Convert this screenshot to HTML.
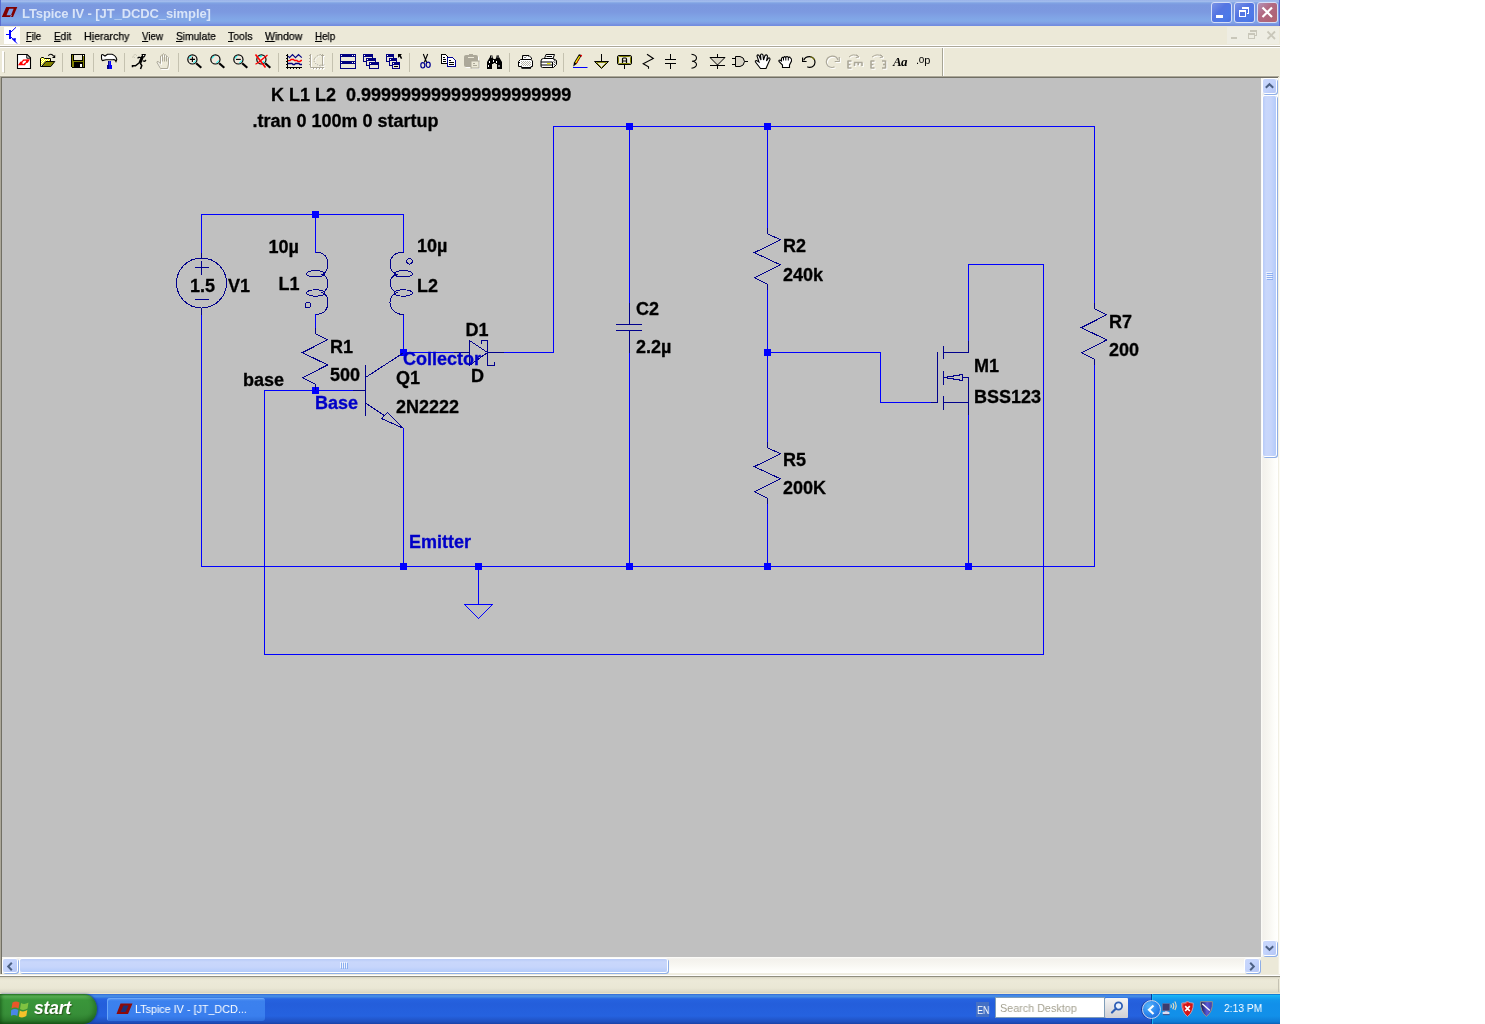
<!DOCTYPE html><html><head><meta charset="utf-8"><title>LTspice IV</title><style>
html,body{margin:0;padding:0;background:#fff;}
body{width:1485px;height:1024px;overflow:hidden;position:relative;font-family:"Liberation Sans",sans-serif;}
#scr{position:absolute;left:0;top:0;width:1280px;height:1024px;overflow:hidden;background:#ece9d8;}
.abs{position:absolute;}
#title{left:0;top:0;width:1280px;height:26px;background:linear-gradient(to bottom,#9bb3ea 0px,#a0bbec 1.5px,#80a3e3 3px,#7b98df 5px,#7c99e0 12px,#80a3e5 17px,#82a9e8 21px,#7e9ce3 23.5px,#728ddf 25px,#728ddf 26px);}
#title .tx{left:21.5px;top:6px;font-weight:bold;font-size:13px;line-height:15px;color:#d8e4f8;white-space:nowrap;letter-spacing:-0.1px;}
#menu{left:0;top:26px;width:1280px;height:19px;background:#ece9d8;}
.mi{position:absolute;top:30px;font-size:11px;color:#000;-webkit-text-stroke:0.25px #000;white-space:nowrap;line-height:12px;transform-origin:0 0;}
.mi,#title .tx,#start div,#tbtn div,.gt{will-change:transform;}
.tb{position:absolute;top:2px;width:19px;height:19px;border:1px solid #d5def7;border-radius:3px;}
.mi u{text-decoration:underline;text-underline-offset:1px;}
#canvas{left:2px;top:78px;width:1259px;height:879px;background:#c0c0c0;}
#sch{position:absolute;left:0;top:0;will-change:transform;}
.ic{position:absolute;top:53px;overflow:visible;}
.sep{position:absolute;top:53px;width:1px;height:19px;background:#c5c2b0;}
.sbtn{width:13px;height:14px;border-radius:2px;background:linear-gradient(135deg,#c9d7fc 0,#c3d3fc 50%,#b4c6f6 100%);box-shadow:0 0 0 1px #fff,1px 1px 0 1px #8eaee6;}
.sth{border-radius:2px;box-shadow:0 0 0 1px #fff,1px 1px 0 1px #8eaee6;}
.sbtn2{width:14px;height:13px;border-radius:2px;background:linear-gradient(135deg,#c9d7fc 0,#c3d3fc 50%,#b4c6f6 100%);box-shadow:0 0 0 1px #fff,1px 1px 0 1px #8eaee6;}
#task{left:0;top:994px;width:1280px;height:30px;background:linear-gradient(to bottom,#3168d5 0,#4993e6 2px,#2663e0 5px,#245edb 10px,#2562df 22px,#1f4fbf 28px,#1941a5 30px);}
#start{left:0;top:994px;width:97px;height:30px;border-radius:0 14px 14px 0/0 16px 16px 0;background:linear-gradient(to bottom,#2a7f2a 0,#58b054 2px,#3a963a 6px,#378f38 20px,#2d7e2e 27px,#236823 30px);box-shadow:1px 0 2px #1b3f9a,inset 2px 0 3px rgba(0,50,0,.35),inset -3px -2px 4px rgba(0,50,0,.3);}
#tbtn{left:107px;top:998px;width:158px;height:23px;border-radius:3px;background:linear-gradient(to bottom,#5c9cf5 0,#3c81ee 3px,#3a7fee 18px,#2f6fdc 23px);box-shadow:inset 1px 1px 0 #6aa6f8;}
#tray{left:1152px;top:994px;width:128px;height:30px;background:linear-gradient(to bottom,#0d62c8 0,#19b6f4 1.500px,#17a8f2 3px,#1296ec 6px,#1190ea 10px,#1290e9 22px,#0e7bd5 28px,#0a5fb5 30px);border-left:1px solid #18b8f5;box-shadow:-1px 0 0 #0a3a9a;}
</style></head><body>
<div id="scr">
<!-- title bar -->
<div id="title" class="abs"><div class="abs tx">LTspice IV - [JT_DCDC_simple]</div></div>
<div class="abs" style="left:0;top:0;width:1px;height:26px;background:#5a6fd0"></div>
<div class="abs" style="left:1279px;top:0;width:1px;height:26px;background:#5a66cf"></div>
<svg class="abs" style="left:1px;top:6px" width="18" height="12" viewBox="0 0 18 12"><path d="M5.200 1H16.300L12 11H0.800Z" fill="#800000"/><path d="M8.300 2.700H12.600L10 9.200H5.500Z" fill="#7c9ce1"/><path d="M10.600 9L9.400 11.200" stroke="#7c9ce1" stroke-width="0.900"/></svg>
<div class="tb" style="left:1211px;background:linear-gradient(135deg,#7a93e6 0,#5575e2 40%,#4d7ae8 75%,#4a6fe0 100%)"><div class="abs" style="left:4px;top:12px;width:7px;height:3px;background:#fff"></div></div>
<div class="tb" style="left:1234px;background:linear-gradient(135deg,#7a93e6 0,#5575e2 40%,#4d7ae8 75%,#4a6fe0 100%)"><svg class="abs" style="left:0;top:0" width="19" height="19" viewBox="0 0 19 19" shape-rendering="crispEdges" fill="none" stroke="#fff"><path d="M7.500 4.500H13.500V10.500H12" stroke-width="1"/><path d="M7 5H14" stroke-width="2"/><rect x="4.500" y="7.500" width="6" height="6"/><path d="M4 8H11" stroke-width="2"/></svg></div>
<div class="tb" style="left:1257px;background:linear-gradient(135deg,#b493b8 0,#b26a82 40%,#ae6478 75%,#b8676f 100%)"><svg class="abs" style="left:0;top:0" width="19" height="19" viewBox="0 0 19 19"><path d="M4.500 4.500L14 14M14 4.500L4.500 14" stroke="#fff" stroke-width="2.200"/></svg></div>
<!-- menu bar -->
<div id="menu" class="abs"></div>
<div class="mi" style="left:26px;transform:scaleX(0.85)"><u>F</u>ile</div>
<div class="mi" style="left:54px;transform:scaleX(0.91)"><u>E</u>dit</div>
<div class="mi" style="left:83.5px;transform:scaleX(0.966)">H<u>i</u>erarchy</div>
<div class="mi" style="left:142px;transform:scaleX(0.888)"><u>V</u>iew</div>
<div class="mi" style="left:175.5px;transform:scaleX(0.93)"><u>S</u>imulate</div>
<div class="mi" style="left:228px;transform:scaleX(0.954)"><u>T</u>ools</div>
<div class="mi" style="left:265px;transform:scaleX(0.953)"><u>W</u>indow</div>
<div class="mi" style="left:315px;transform:scaleX(0.893)"><u>H</u>elp</div>
<div class="abs" style="left:4px;top:27px;width:16px;height:17px;background:#fff"></div>
<svg class="abs" style="left:4px;top:27px" width="16" height="17" viewBox="0 0 16 17"><rect x="5" y="3" width="2" height="9" fill="#00f"/><rect x="2" y="7" width="3" height="1" fill="#00f"/><path d="M7 5L12 0.300" stroke="#00f" stroke-width="1"/><path d="M7 10L13 16.500" stroke="#00f" stroke-width="1"/><path d="M8.500 12L11.500 11.500L11 14.500Z" fill="#00f" stroke="#00f" stroke-width="0.800"/></svg>
<div class="abs" style="left:1227px;top:27px;width:52px;height:17px;background:#eeede3"></div>
<div class="abs" style="left:1231px;top:37px;width:6px;height:2px;background:#c9c7ba"></div>
<svg class="abs" style="left:1246px;top:28px" width="14" height="14" viewBox="0 0 14 14" shape-rendering="crispEdges" fill="none" stroke="#c9c7ba"><path d="M4.500 2.500H10.500V7.500H9"/><path d="M4 3H11" stroke-width="2"/><rect x="2.500" y="5.500" width="6" height="5"/><path d="M2 6H9" stroke-width="2"/></svg>
<svg class="abs" style="left:1265px;top:29px" width="13" height="13" viewBox="0 0 13 13"><path d="M2.500 2.500L10 10M10 2.500L2.500 10" stroke="#c9c7ba" stroke-width="1.800"/></svg>
<!-- menu/toolbar separator -->
<div class="abs" style="left:0;top:45px;width:1280px;height:1px;background:#fff"></div>
<div class="abs" style="left:0;top:46px;width:1280px;height:1px;background:#aca899"></div>
<div class="abs" style="left:0;top:47px;width:1280px;height:1px;background:#fff"></div>
<div class="abs" style="left:0;top:75px;width:1280px;height:1px;background:#f0eddc"></div>
<!-- toolbar bottom edge -->
<div class="abs" style="left:0;top:76px;width:1279px;height:1px;background:#aca899"></div>
<div class="abs" style="left:0;top:77px;width:1278px;height:1px;background:#716f64"></div>
<!-- left border -->
<div class="abs" style="left:0;top:76px;width:1px;height:898px;background:#aca899"></div>
<div class="abs" style="left:1px;top:77px;width:1px;height:897px;background:#716f64"></div>
<!-- canvas -->
<div id="canvas" class="abs"></div>
<!-- vertical scrollbar -->
<div class="abs" style="left:1261px;top:78px;width:17px;height:879px;background:linear-gradient(to right,#fdfdfa 0,#f3f1ec 2px,#f8f7f2 8px,#fefefb 14px,#fff 17px)"></div>
<div class="abs" style="left:1278px;top:78px;width:1px;height:897px;background:#f1efe3"></div>
<div class="abs" style="left:1279px;top:78px;width:1px;height:897px;background:#fdfcf6"></div>
<div class="abs sbtn" style="left:1263px;top:79px"><svg width="13" height="14" viewBox="0 0 13 14"><path d="M2.800 8.800L6.500 5.200L10.200 8.800" fill="none" stroke="#4d6185" stroke-width="2"/></svg></div>
<div class="abs sbtn" style="left:1263px;top:941px"><svg width="13" height="14" viewBox="0 0 13 14"><path d="M2.800 5.200L6.500 8.800L10.200 5.200" fill="none" stroke="#4d6185" stroke-width="2"/></svg></div>
<div class="abs sth" style="left:1263px;top:96px;width:13px;height:360px;background:linear-gradient(to right,#b7caf7 0,#c9d7fb 3px,#c6d5fb 8px,#b4cbfa 13px)"></div>
<div class="abs" style="left:1266px;top:272px;width:6px;height:1px;background:#eef3fe;box-shadow:0 2px 0 #eef3fe,0 4px 0 #eef3fe,0 6px 0 #eef3fe,1px 1px 0 #8caef0,1px 3px 0 #8caef0,1px 5px 0 #8caef0,1px 7px 0 #8caef0"></div>
<!-- horizontal scrollbar -->
<div class="abs" style="left:2px;top:957px;width:1259px;height:16px;background:linear-gradient(to bottom,#fdfdfa 0,#f3f1ec 2px,#f8f7f2 8px,#fefefb 14px,#fff 16px)"></div>
<div class="abs" style="left:2px;top:973px;width:1259px;height:1px;background:#f1efe3"></div>
<div class="abs sbtn2" style="left:3px;top:959px"><svg width="14" height="13" viewBox="0 0 14 13"><path d="M8.800 2.800L5.200 6.500L8.800 10.200" fill="none" stroke="#4d6185" stroke-width="2"/></svg></div>
<div class="abs sbtn2" style="left:1245px;top:959px"><svg width="14" height="13" viewBox="0 0 14 13"><path d="M5.200 2.800L8.800 6.500L5.200 10.200" fill="none" stroke="#4d6185" stroke-width="2"/></svg></div>
<div class="abs sth" style="left:20px;top:959px;width:647px;height:13px;background:linear-gradient(to bottom,#b7caf7 0,#c9d7fb 3px,#c6d5fb 8px,#b4cbfa 13px)"></div>
<div class="abs" style="left:340px;top:962px;width:1px;height:6px;background:#eef3fe;box-shadow:2px 0 0 #eef3fe,4px 0 0 #eef3fe,6px 0 0 #eef3fe,1px 1px 0 #8caef0,3px 1px 0 #8caef0,5px 1px 0 #8caef0,7px 1px 0 #8caef0"></div>
<!-- scroll corner -->
<div class="abs" style="left:1261px;top:957px;width:17px;height:17px;background:#ece9d8"></div>
<!-- below scrollbar -->
<div class="abs" style="left:0;top:974px;width:1280px;height:1px;background:#efede0"></div>
<div class="abs" style="left:0;top:975px;width:1280px;height:1px;background:#fff"></div>
<div class="abs" style="left:0;top:976px;width:1280px;height:1px;background:#8f8d7f"></div>
<div class="abs" style="left:0;top:977px;width:1280px;height:17px;background:linear-gradient(to bottom,#d6d3c1 0,#e9e6d4 2px,#ece9d8 4px,#eae7d5 11px,#e0ddcb 14px,#d8d5c1 16px,#ebe5cc 16px,#ebe5cc 17px)"></div>
<div class="abs" style="left:1278px;top:979px;width:1px;height:13px;background:#c5c2b2"></div>
<!-- taskbar -->
<div id="task" class="abs"></div>
<div id="start" class="abs"><div class="abs" style="left:34px;top:4px;font:italic bold 17.5px/20px 'Liberation Sans',sans-serif;color:#fff;text-shadow:1px 1px 1px #2a5a1c;letter-spacing:-0.2px">start</div>
<svg class="abs" style="left:11px;top:5px" width="20" height="20" viewBox="0 0 20 20"><path d="M1.5 3.5Q5 1.5 8.5 3.5L7.5 9.5Q4 7.5 0.5 9.5Z" fill="#e8562a"/><path d="M10 4Q13.5 6 17.5 3.5L16.5 9.5Q12.5 12 9 10Z" fill="#7fc241"/><path d="M0.3 11Q4 9 7.3 11L6.3 17Q3 15-0.7 17Z" fill="#4a86e8"/><path d="M8.8 11.5Q12.3 13.500 16.300 11L15.300 17Q11.300 19.500 7.800 17.500Z" fill="#f5c12a"/></svg></div>
<div id="tbtn" class="abs"><div class="abs" style="left:28px;top:5px;font-size:11px;color:#fff;white-space:nowrap;transform:scaleX(.98);transform-origin:0 0">LTspice IV - [JT_DCD...</div>
<svg class="abs" style="left:9px;top:5px" width="17" height="12" viewBox="0 0 17 12"><path d="M4.500 0.500H16.500L12 11H0.500Z" fill="#8c0a0a"/><path d="M7.500 2.500H12.500L9.500 9H4.500Z" fill="#1c2f7a"/></svg></div>
<div id="tray" class="abs"></div>
<div class="abs" style="left:976px;top:1002px;width:13px;height:15px;background:#4470c4"></div>
<div class="abs gt" style="left:976.5px;top:1004px;font-size:11px;color:#fff;transform:scaleX(.82);transform-origin:0 0">EN</div>
<div class="abs" style="left:995px;top:997px;width:108px;height:19px;background:#fff;border:1px solid #7f9db9"></div>
<div class="abs gt" style="left:1000px;top:1002px;font-size:11px;color:#a5a291;white-space:nowrap;transform:scaleX(.98);transform-origin:0 0">Search Desktop</div>
<div class="abs" style="left:1105px;top:998px;width:23px;height:20px;background:linear-gradient(to bottom,#f4f4f4,#d0d0d4);border-radius:1px"></div>
<svg class="abs" style="left:1109px;top:1000px" width="16" height="16" viewBox="0 0 16 16"><circle cx="9.500" cy="6" r="3.600" fill="#eaf2ff" stroke="#2f5fb5" stroke-width="1.800"/><path d="M7 8.500L3 12.500" stroke="#2f5fb5" stroke-width="2.200" stroke-linecap="round"/></svg>
<div class="abs" style="left:1142px;top:1000px;width:17px;height:17px;border-radius:10px;background:radial-gradient(circle at 35% 30%,#58b4f8 0,#2f8cf0 45%,#1560d8 100%);border:1px solid #c9d3ea;box-shadow:-1px 0 0 #1a3c9a"></div>
<svg class="abs" style="left:1143px;top:1001px" width="17" height="17" viewBox="0 0 17 17"><path d="M10.500 4.500L6 8.700L10.500 13" fill="none" stroke="#fff" stroke-width="2.200"/></svg>
<svg class="abs" style="left:1162px;top:1001px" width="17" height="16" viewBox="0 0 17 16"><rect x="0.700" y="2.700" width="7" height="7" fill="#3c3c6e" stroke="#6a6a96" stroke-width="0.600"/><path d="M3 10H5.500V11H3Z" fill="#b8a8d8"/><rect x="0.500" y="10.800" width="7" height="2.500" rx="1" fill="#dcdcf0"/><rect x="1" y="13.300" width="6.500" height="0.800" fill="#4a3a6a"/><path d="M8.800 3.500Q10 5 8.800 6.800M10.800 2Q12.800 5 10.800 8.200M12.800 0.500Q15.500 4.500 12.800 9" fill="none" stroke="#e8dcc0" stroke-width="1.100"/></svg>
<svg class="abs" style="left:1181px;top:1001px" width="13" height="16" viewBox="0 0 13 16"><path d="M6.500 0.500Q9 2 12.300 2.200Q12.500 11 6.500 15.500Q0.500 11 0.700 2.200Q4 2 6.500 0.500Z" fill="#d41414" stroke="#c8a8b8" stroke-width="0.900"/><path d="M6.500 1.500Q4.500 2.800 1.700 3Q1.600 6 2.500 8.500" fill="none" stroke="#f26060" stroke-width="1"/><path d="M4.200 5.200L8.800 10M8.800 5.200L4.200 10" stroke="#fff" stroke-width="1.700"/></svg>
<svg class="abs" style="left:1200px;top:1001px" width="13" height="16" viewBox="0 0 13 16"><defs><linearGradient id="bs" x1="0" y1="0" x2="1" y2="0"><stop offset="0" stop-color="#16164e"/><stop offset="0.550" stop-color="#5a5ad8"/><stop offset="1" stop-color="#3a3aa8"/></linearGradient></defs><path d="M0.600 0.700H12.400Q12.800 11 6.500 15.500Q0.200 11 0.600 0.700Z" fill="url(#bs)" stroke="#a09484" stroke-width="0.900"/><path d="M2.300 2.800L9.800 9.500" stroke="#fff" stroke-width="1.300"/></svg>
<div class="abs gt" style="left:1224px;top:1002px;font-size:11px;color:#fff;white-space:nowrap;transform:scaleX(.935);transform-origin:0 0">2:13 PM</div>

<!-- toolbar gripper -->
<div class="abs" style="left:2px;top:51px;width:2px;height:21px;background:#fff"></div>
<div class="abs" style="left:4px;top:52px;width:1px;height:21px;background:#c6c3b2"></div>
<!-- toolbar end -->
<div class="abs" style="left:942px;top:48px;width:1px;height:28px;background:#a7a594"></div>
<div class="abs" style="left:943px;top:48px;width:1px;height:28px;background:#fff"></div>
<!-- separators -->
<div class="sep" style="left:62px"></div><div class="sep" style="left:93px"></div><div class="sep" style="left:124px"></div>
<div class="sep" style="left:178px"></div><div class="sep" style="left:278px"></div><div class="sep" style="left:332px"></div>
<div class="sep" style="left:409px"></div><div class="sep" style="left:509px"></div><div class="sep" style="left:563px"></div>
<!-- new -->
<svg class="ic" style="left:16px" width="17" height="17" viewBox="0 0 17 17"><path d="M1.500 1.500H11.200L14.500 4.800V15.500H1.500Z" fill="#fff" stroke="#000" stroke-width="1.100"/><path d="M10.800 1.800V5.200H14.200" fill="none" stroke="#000" stroke-width="1"/><path d="M2 12.300L4.300 8.800L6 8.300L7 6.500L14 6.200L11.800 9.800L10.200 10.200L9 12.300Z" fill="#f00"/><path d="M6.200 10.300L7 8.600L8.200 7.800L10.300 7.800L9.500 9.600L8.300 10.300L7.300 11.300Z" fill="#fff"/></svg>
<!-- open -->
<svg class="ic" style="left:40px" width="17" height="17" viewBox="0 0 17 17"><path d="M0.500 13.500V5.500L1.500 4.500H3.500L4.500 5.500H10.500V8.500H6L2 13.500Z" fill="#ffff00" stroke="#000"/><path d="M1 6h1v1H1zM3 6h1v1H3zM5 6h1v1H5zM7 6h1v1H7zM9 6h1v1H9zM2 7h1v1H2zM4 7h1v1H4zM6 7h1v1H6zM8 7h1v1H8zM1 8h1v1H1zM3 8h1v1H3zM5 8h1v1H5zM2 9h1v1H2zM4 9h1v1H4zM1 10h1v1H1zM3 10h1v1H3zM2 11h1v1H2zM1 12h1v1H1zM2 5h1v1H2z" fill="#fff" shape-rendering="crispEdges"/><path d="M1.500 13.500L5.800 8.500H14.800L10.800 13.500Z" fill="#808000" stroke="#000"/><path d="M8.300 2.700Q10.800 -0.300 13.600 3.200" fill="none" stroke="#000" stroke-width="1.100"/><path d="M15.200 1.800V4.900H12Z" fill="#000"/></svg>
<!-- save -->
<svg class="ic" style="left:70px" width="17" height="17" viewBox="0 0 17 17" shape-rendering="crispEdges"><path d="M1.500 1.500H14.500V14.500H2.500L1.500 13.500Z" fill="#808000" stroke="#000"/><rect x="3.500" y="1.500" width="9" height="6" fill="#ece9d8" stroke="#000"/><rect x="4" y="9" width="9" height="5" fill="#000"/><rect x="10" y="11" width="2" height="3" fill="#fff"/><rect x="13" y="2" width="1" height="1" fill="#fff"/></svg>
<!-- hammer -->
<svg class="ic" style="left:100px" width="18" height="17" viewBox="0 0 18 17"><defs><linearGradient id="hg" x1="0" y1="0" x2="0" y2="1"><stop offset="0" stop-color="#fff"/><stop offset="0.550" stop-color="#fff"/><stop offset="1" stop-color="#a8a8a8"/></linearGradient></defs><path d="M1.500 2.500Q1.500 1.200 3 1.700L5 3L7.500 1.200H12Q16 2.500 16.800 6.500L16 8.500Q15 6.200 13 6.800H6L4 7.200L2.500 7.600Q1.500 7 1.500 5Z" fill="url(#hg)" stroke="#000" stroke-width="1.100"/><rect x="8" y="8" width="1.500" height="8" fill="#000090"/><rect x="9.500" y="8" width="1.500" height="8" fill="#0000ff"/><rect x="7" y="12" width="2.500" height="4" fill="#000090"/><rect x="9.500" y="12" width="2.500" height="4" fill="#0000ff"/></svg>
<!-- run -->
<svg class="ic" style="left:131px" width="17" height="17" viewBox="0 0 17 17"><path d="M10.500 1H15L13.800 4.200H11Z" fill="#000"/><rect x="12" y="2" width="1.200" height="1.200" fill="#fff"/><path d="M11.500 3.500L9 9.800" stroke="#000" stroke-width="3" fill="none"/><path d="M9.200 9L4.500 12.800H1.500V14.200" stroke="#000" stroke-width="1.500" fill="none"/><path d="M9.200 10L10.800 12.500L9.500 16" stroke="#000" stroke-width="1.500" fill="none"/><path d="M10.500 5L8 4.200L6.500 5.200" stroke="#000" stroke-width="1.300" fill="none"/><path d="M11.800 7.800L13.800 8.300L15 7" stroke="#000" stroke-width="1.300" fill="none"/><path d="M2.500 2.200L4.500 1.500L6 2.800M1 4.200L2.800 3.800L4 5" stroke="#c2bfae" stroke-width="0.800" fill="none"/></svg>
<!-- hand disabled -->
<svg class="ic" style="left:156px" width="17" height="18" viewBox="0 0 17 18" fill="none"><g transform="translate(1,1)" stroke="#fff"><path d="M4.500 15.500L1 9.500Q0.500 8.500 2 8.500L4.500 10.500V3Q5.500 1.500 6.500 3V1.500Q7.500 0 8.500 1.500V2.500Q9.500 1 10.500 2.500V4Q11.500 3 12.500 4.500V11L11.500 15.500Z"/></g><g stroke="#aca899"><path d="M4.500 15.500L1 9.500Q0.500 8.500 2 8.500L4.500 10.500V3Q5.500 1.500 6.500 3V1.500Q7.500 0 8.500 1.500V2.500Q9.500 1 10.500 2.500V4Q11.500 3 12.500 4.500V11L11.500 15.500Z"/><path d="M6.500 3V8.500M8.500 2V8.500M10.500 3V8.500"/></g></svg>
<!-- zoom icons -->
<svg class="ic" style="left:186px" width="18" height="17" viewBox="0 0 18 17"><circle cx="6.400" cy="6.400" r="4.600" fill="#f0e9dd" stroke="#000" stroke-width="1.200"/><path d="M3.200 5.500Q3.800 3.500 5.500 3M9.600 7.500Q9 9.300 7.300 9.800" stroke="#00ffff" stroke-width="1" fill="none"/><path d="M3.800 6.400H9M6.400 3.800V9" stroke="#000" stroke-width="1.100"/><path d="M10.200 10.200L15.300 14.800" stroke="#000" stroke-width="2.200"/></svg>
<svg class="ic" style="left:209px" width="18" height="17" viewBox="0 0 18 17"><circle cx="6.400" cy="6.400" r="4.600" fill="#f0e9dd" stroke="#000" stroke-width="1.200"/><path d="M3.200 5.500Q3.800 3.500 5.500 3M9.600 7.500Q9 9.300 7.300 9.800" stroke="#00ffff" stroke-width="1" fill="none"/><path d="M10.200 10.200L15.300 14.800" stroke="#000" stroke-width="2.200"/></svg>
<svg class="ic" style="left:232px" width="18" height="17" viewBox="0 0 18 17"><circle cx="6.400" cy="6.400" r="4.600" fill="#f0e9dd" stroke="#000" stroke-width="1.200"/><path d="M3.200 5.500Q3.800 3.500 5.500 3M9.600 7.500Q9 9.300 7.300 9.800" stroke="#00ffff" stroke-width="1" fill="none"/><path d="M4 6.400H8.800" stroke="#000" stroke-width="1.100"/><path d="M10.200 10.200L15.300 14.800" stroke="#000" stroke-width="2.200"/></svg>
<svg class="ic" style="left:255px" width="18" height="17" viewBox="0 0 18 17"><circle cx="6.400" cy="6.400" r="4.600" fill="#f0e9dd" stroke="#000" stroke-width="1.200"/><path d="M4.500 4Q5.500 3 6.800 3.200M9 8.500Q8 9.800 6.800 9.800" stroke="#00ffff" stroke-width="1.500" fill="none"/><path d="M10.200 10.200L15.300 14.800" stroke="#000" stroke-width="2.200"/><path d="M0.500 1.500L10.500 14.500" stroke="#f00" stroke-width="1.600"/><path d="M12.500 2L4 9L0.500 11.200" stroke="#f00" stroke-width="1.300"/></svg>
<!-- waveform -->
<svg class="ic" style="left:285px" width="18" height="17" viewBox="0 0 18 17"><g shape-rendering="crispEdges"><rect x="2" y="1" width="1" height="15" fill="#000"/><rect x="1" y="14" width="16" height="1" fill="#000"/><path d="M1 2H2V3H1ZM1 5H2V6H1ZM1 8H2V9H1ZM1 11H2V12H1ZM5 15H6V16H5ZM8 15H9V16H8ZM11 15H12V16H11ZM14 15H15V16H14Z" fill="#000"/></g><path d="M3 3L4.500 4.700L7.500 1.500L10.500 4.700L13.500 1.500L16.800 4.700" fill="none" stroke="#000080" stroke-width="1.100"/><path d="M3 7.600H5L6 6.500H8.500L9.500 7.500H12L13 8.500H15L16 7.500H17" fill="none" stroke="#f00" stroke-width="1.300"/><path d="M3 10.500H7L8 11.500H9.500L10.500 10.500H14L15 11.500H17" fill="none" stroke="#000080" stroke-width="1.300"/></svg>
<!-- disabled plot -->
<svg class="ic" style="left:308px" width="19" height="18" viewBox="0 0 19 18" fill="none"><g id="dpl"><path d="M2.500 1V14.500H16M1 2.500H2M1 5.500H2M1 8.500H2M1 11.500H2M5.500 15V16M8.500 15V16M11.500 15V16M14.500 15V16"/><path d="M13 1.500Q6.500 3 6 7.500Q6.500 11.500 13 13" stroke-dasharray="1.500 1"/><path d="M14.500 1.500V13M13 3L14.500 1.500L16 3M13 11.500L14.500 13L16 11.500"/></g><use href="#dpl" x="1" y="1" stroke="#fff"/><use href="#dpl" stroke="#aca899"/></svg>
<!-- tile -->
<svg class="ic" style="left:340px" width="17" height="17" viewBox="0 0 17 17" shape-rendering="crispEdges"><rect x="0" y="1" width="16" height="15" fill="#000080"/><rect x="1" y="4" width="14" height="4" fill="#ece9d8"/><rect x="1" y="11" width="14" height="4" fill="#ece9d8"/><path d="M1 2H2V3H1ZM12 2H13V3H12ZM14 2H15V3H14ZM1 9H2V10H1ZM12 9H13V10H12ZM14 9H15V10H14Z" fill="#fff"/></svg>
<!-- cascade -->
<svg class="ic" style="left:363px" width="17" height="17" viewBox="0 0 17 17" shape-rendering="crispEdges"><rect x="0" y="1" width="10" height="8" fill="#000080"/><rect x="1" y="4" width="8" height="4" fill="#ece9d8"/><rect x="3" y="5" width="10" height="8" fill="#000080"/><rect x="4" y="8" width="8" height="4" fill="#ece9d8"/><rect x="6" y="9" width="10" height="7" fill="#000080"/><rect x="7" y="12" width="8" height="3" fill="#ece9d8"/><path d="M1 2H2V3H1ZM4 6H5V7H4ZM7 10H8V11H7Z" fill="#fff"/></svg>
<!-- cascade arrow -->
<svg class="ic" style="left:386px" width="18" height="17" viewBox="0 0 18 17"><g shape-rendering="crispEdges"><rect x="0" y="1" width="8" height="8" fill="#000080"/><rect x="1" y="4" width="6" height="4" fill="#ece9d8"/><rect x="3" y="5" width="8" height="8" fill="#000080"/><rect x="4" y="8" width="6" height="4" fill="#ece9d8"/><rect x="6" y="9" width="8" height="7" fill="#000080"/><rect x="7" y="12" width="6" height="3" fill="#ece9d8"/><rect x="8" y="13" width="4" height="1" fill="#000"/><path d="M1 2H2V3H1ZM4 6H5V7H4ZM7 10H8V11H7Z" fill="#fff"/></g><path d="M12 1H16L14.700 2.300L16.200 5.300L15 6L13.400 3.500L12 5Z" fill="#000"/></svg>
<!-- scissors -->
<svg class="ic" style="left:420px" width="12" height="17" viewBox="0 0 12 17" fill="none"><path d="M3.300 1L6.700 9.500M7.700 1L4.300 9.500" stroke="#000" stroke-width="1.100"/><ellipse cx="2.800" cy="12.300" rx="2" ry="2.700" stroke="#000090" stroke-width="1.200"/><ellipse cx="8.200" cy="11.800" rx="2" ry="2.700" stroke="#000090" stroke-width="1.200"/></svg>
<!-- copy -->
<svg class="ic" style="left:441px" width="17" height="17" viewBox="0 0 17 17" shape-rendering="crispEdges"><path d="M0.500 1.500H4.500L6.500 3.500V10.500H0.500Z" fill="#fff" stroke="#000"/><path d="M2 4H4M2 6H5M2 8H5" stroke="#000"/><path d="M6.500 4.500H11.500L14.500 7.500V13.500H6.500Z" fill="#fff" stroke="#000090"/><path d="M8 7.500H10M8 9.500H13M8 11.500H13" stroke="#000"/></svg>
<!-- paste disabled -->
<svg class="ic" style="left:464px" width="18" height="17" viewBox="0 0 18 17"><rect x="1" y="3" width="14" height="12" rx="2" fill="#fff"/><rect x="0" y="2" width="14" height="12" rx="2" fill="#aca899"/><rect x="5" y="1" width="4" height="2" fill="#aca899"/><rect x="4" y="4" width="6" height="1" fill="#ece9d8"/><rect x="8" y="9" width="8" height="7" fill="#fff"/><rect x="7" y="8" width="8" height="7" fill="#ece9d8" stroke="#aca899"/><path d="M9 10.500H11M9 12.500H13" stroke="#aca899"/></svg>
<!-- binoculars -->
<svg class="ic" style="left:486px" width="18" height="17" viewBox="0 0 18 17"><path d="M4 2.500H6.500V4L7.500 6H9.500L10.500 4V2.500H13V4L16 9V16H11V11H9.500V10H7.500V11H6V16H1V9L4 4Z" fill="#000"/><path d="M5 3.500H6V4.500H5ZM11.500 3.500H12.500V4.500H11.500ZM3 8H4V10H3ZM7 7H8V9H7ZM10 8H11V10H10ZM2 12H3V14H2ZM12.500 12H13.500V14H12.500Z" fill="#fff"/></svg>
<!-- print setup -->
<svg class="ic" style="left:517px" width="17" height="17" viewBox="0 0 17 17"><path d="M5.500 6.500V2.500H12L14.500 5V6.500" fill="#fff" stroke="#000"/><path d="M6.500 3.500L8 5L9.500 3.500M11 3.500H12.500" fill="none" stroke="#777" stroke-width="0.900"/><path d="M1.500 8.500L3.500 6.500H14L15.500 8V13.500H14V14.500H4.500V13.500H1.500Z" fill="#fff" stroke="#000"/><path d="M1.500 9.500H3" stroke="#000"/><g fill="#b8b5a8"><path d="M4 8h1v1H4zM6 8h1v1H6zM8 8h1v1H8zM10 8h1v1h-1zM12 8h1v1h-1zM5 9h1v1H5zM7 9h1v1H7zM9 9h1v1H9zM11 9h1v1h-1zM13 9h1v1h-1zM4 10h1v1H4zM6 10h1v1H6zM8 10h1v1H8zM10 10h1v1h-1zM12 10h1v1h-1zM5 11h1v1H5zM7 11h1v1H7zM9 11h1v1H9zM11 11h1v1h-1zM13 11h1v1h-1zM4 12h1v1H4zM6 12h1v1H6zM8 12h1v1H8zM10 12h1v1h-1zM12 12h1v1h-1z"/></g><rect x="4.500" y="14.500" width="9.500" height="1.300" fill="#000"/></svg>
<!-- printer -->
<svg class="ic" style="left:540px" width="18" height="17" viewBox="0 0 18 17"><path d="M4.500 5.500L6 1.500H14.500L13 5.500Z" fill="#fff" stroke="#000"/><path d="M6.500 3.500H12" stroke="#000"/><path d="M1 8Q1 5.500 3.500 5.500H13L16.500 7.500V11.500L13.500 14.500H2.500Q1 14.500 1 13Z" fill="#fff" stroke="#000"/><path d="M1 9H12.500M1 12H12.500M12.500 9V14.500" stroke="#000" fill="none"/><rect x="7" y="10" width="3.500" height="1.200" fill="#e6e600"/><path d="M13.500 6.500L15.500 8M13.500 8.500L15.500 10M13.500 11L15 12" stroke="#000" stroke-width="0.800"/></svg>
<!-- wire pencil -->
<svg class="ic" style="left:572px" width="17" height="17" viewBox="0 0 17 17"><rect x="1" y="14" width="14.500" height="1" fill="#0000ff"/><path d="M1.200 13.500L2 9.500L7 1.200L9.500 2.800L4.500 11Z" fill="#000"/><path d="M3 9.500L7.200 2.800L8.200 3.500L4.200 10.200Z" fill="#ffee00"/><path d="M7.800 1.300L9.400 2.300L8.800 3.300L7.300 2.300Z" fill="#000"/><circle cx="9.200" cy="2.700" r="0.900" fill="#f00"/><path d="M4.500 10.500L5.500 9M5.800 8.200L6.800 6.600" stroke="#f00" stroke-width="0.900"/></svg>
<!-- ground -->
<svg class="ic" style="left:593px" width="17" height="17" viewBox="0 0 17 17"><path d="M8.500 1V8" stroke="#000"/><path d="M1.500 8.500H15.500L8.500 15.500Z" fill="#ece9d8" stroke="#000"/><path d="M3.500 9.500H13.500L8.500 14.500Z" fill="none" stroke="#808000" stroke-width="0.900"/></svg>
<!-- label -->
<svg class="ic" style="left:616px" width="17" height="17" viewBox="0 0 17 17"><rect x="1.500" y="2.500" width="14" height="9" rx="1.500" fill="#ece9d8" stroke="#000"/><rect x="2.500" y="3.500" width="12" height="7" rx="1" fill="none" stroke="#808000"/><path d="M8.500 12V16" stroke="#000"/><path d="M6.500 10V6.200Q6.500 5 7.500 5H9.500Q10.500 5 10.500 6.200V10M6.500 8H10.500" fill="none" stroke="#000" stroke-width="1.200"/></svg>
<!-- resistor -->
<svg class="ic" style="left:642px" width="13" height="17" viewBox="0 0 13 17"><path d="M5 1.300L11.300 5.500L1.200 10.700L6.500 13.700V15.700" fill="none" stroke="#000" stroke-width="1.100"/></svg>
<!-- capacitor -->
<svg class="ic" style="left:664px" width="13" height="17" viewBox="0 0 13 17" shape-rendering="crispEdges"><path d="M6.500 1V6M1 6.500H12M1 10.500H12M6.500 11V16" stroke="#000" fill="none"/></svg>
<!-- inductor -->
<svg class="ic" style="left:689px" width="9" height="17" viewBox="0 0 9 17"><path d="M2.500 1.300Q7.500 2 7.500 5Q7.500 8 3 8.200Q7.500 8.800 7.500 11.500Q7.500 14.500 2.500 15.300" fill="none" stroke="#000" stroke-width="1.100"/></svg>
<!-- diode -->
<svg class="ic" style="left:709px" width="17" height="17" viewBox="0 0 17 17"><path d="M8.500 1V16" stroke="#000"/><path d="M1 4.500H16L8.500 12Z" fill="#d9d5c6" stroke="#000"/><path d="M1 12.500H16" stroke="#000"/></svg>
<!-- and gate -->
<svg class="ic" style="left:732px" width="17" height="17" viewBox="0 0 17 17"><path d="M3.500 3.500H8Q12 4 12.500 8.500Q12 13 8 13.500H3.500Z" fill="#d9d5c6" stroke="#000"/><path d="M0 5.500H3.500M0 11.500H3.500M12.500 8.500H16" stroke="#000"/></svg>
<!-- hand open -->
<svg class="ic" style="left:754px" width="18" height="17" viewBox="0 0 18 17"><path d="M6.500 15.500L1.500 9Q1 7.500 2.500 7.500L5 9L3 3Q3.500 1 5 2.500L7 7L6.500 2Q7.500 0 9 2L9.500 7L11 2.500Q12.500 1 13.500 3L12.500 8L14.500 5Q16 4.500 16 6.500L13.500 12L12 15.500Z" fill="#fff" stroke="#000" stroke-width="1.100"/></svg>
<!-- hand closed -->
<svg class="ic" style="left:778px" width="15" height="17" viewBox="0 0 15 17"><path d="M4.500 14.500V12L1 8.500Q0.500 7 2 7L3.500 8V5.500Q4.500 3.500 5.500 5Q6.500 2.500 7.800 4.500Q9 2.500 10.300 4.500Q11.500 3.500 12.500 5Q13.800 5.500 13.500 8L11.500 12V14.500Z" fill="#fff" stroke="#000" stroke-width="1.100"/><path d="M5.500 5V7.500M7.800 4.500V7.500M10.300 4.500V7.500" stroke="#000" fill="none"/></svg>
<!-- undo -->
<svg class="ic" style="left:801px" width="17" height="17" viewBox="0 0 17 17"><path d="M2.800 7.200Q4.200 3.500 8.800 3.700Q13.800 4.500 14 9.200Q13.600 14 8.800 14.400Q7.300 14.400 6.300 13.700" fill="none" stroke="#000" stroke-width="1.200"/><path d="M1.600 4.500V8.500H5.600" fill="none" stroke="#000" stroke-width="1.200"/><path d="M9.500 3.800Q12.500 4.500 13.400 7" fill="none" stroke="#808000" stroke-width="1"/></svg>
<!-- redo disabled -->
<svg class="ic" style="left:824px" width="18" height="18" viewBox="0 0 18 18" fill="none"><g id="rdo"><path d="M14 7Q12.500 3 8 3.200Q2.500 4 2.300 9Q2.700 14 8 14.500Q9.500 14.500 10.500 13.800"/><path d="M15.200 4V8.500H10.700"/></g><use href="#rdo" x="1" y="1" stroke="#fff" stroke-width="1.200"/><use href="#rdo" stroke="#aca899" stroke-width="1.200"/></svg>
<!-- rotate disabled -->
<svg class="ic" style="left:846px" width="19" height="18" viewBox="0 0 19 18" fill="none"><g id="rot"><path d="M2 7.500V15.500M2 8H5.500M2 11.500H4.500M2 15H5.500" stroke-width="1.600"/><path d="M8 9.500H16.500M8.500 9.500V13M12.200 9.500V12.200M16 9.500V13" stroke-width="1.600"/><path d="M3 4Q7 0 12.500 3.500M10.500 1.500L13 4L9.800 4.500" stroke-width="1"/></g><use href="#rot" x="1" y="1" stroke="#fff"/><use href="#rot" stroke="#aca899"/></svg>
<!-- mirror disabled -->
<svg class="ic" style="left:869px" width="19" height="18" viewBox="0 0 19 18" fill="none"><g id="mir"><path d="M2 7.500V15.500M2 8H5.500M2 11.500H4.500M2 15H5.500" stroke-width="1.600"/><path d="M16.500 7.500V15.500M16.500 8H13M16.500 11.500H14M16.500 15H13" stroke-width="1.600"/><path d="M3 4Q8 0 13.500 3.500M11.500 1.500L14 4L10.800 4.500" stroke-width="1"/></g><use href="#mir" x="1" y="1" stroke="#fff"/><use href="#mir" stroke="#aca899"/></svg>
<!-- Aa -->
<div class="abs gt" style="left:893px;top:54px;font:italic bold 13px 'Liberation Serif',serif;color:#000;letter-spacing:-0.6px;line-height:16px">Aa</div>
<!-- .op -->
<div class="abs gt" style="left:916px;top:52px;font:11px 'Liberation Sans',sans-serif;color:#000;line-height:16px;letter-spacing:-0.2px">.<span style="position:relative;top:-1px;font-size:10px">o</span>p</div>

<svg id="sch" width="1280" height="1024" viewBox="0 0 1280 1024"><g fill="none" stroke-width="1" shape-rendering="crispEdges"><rect x="553" y="126" width="542" height="1" fill="#0000ff"/><rect x="553" y="126" width="1" height="227" fill="#0000ff"/><rect x="503" y="352" width="51" height="1" fill="#0000ff"/><rect x="629" y="126" width="1" height="178" fill="#0000ff"/><rect x="629" y="352" width="1" height="215" fill="#0000ff"/><rect x="767" y="126" width="1" height="102" fill="#0000ff"/><rect x="767" y="290" width="1" height="152" fill="#0000ff"/><rect x="767" y="504" width="1" height="63" fill="#0000ff"/><rect x="767" y="352" width="114" height="1" fill="#0000ff"/><rect x="880" y="352" width="1" height="51" fill="#0000ff"/><rect x="880" y="402" width="52" height="1" fill="#0000ff"/><rect x="1094" y="126" width="1" height="177" fill="#0000ff"/><rect x="1094" y="365" width="1" height="202" fill="#0000ff"/><rect x="201" y="566" width="894" height="1" fill="#0000ff"/><rect x="201" y="214" width="1" height="40" fill="#0000ff"/><rect x="201" y="314" width="1" height="253" fill="#0000ff"/><rect x="201" y="214" width="203" height="1" fill="#0000ff"/><rect x="315" y="214" width="1" height="39" fill="#0000ff"/><rect x="315" y="314" width="1" height="14" fill="#0000ff"/><rect x="403" y="214" width="1" height="39" fill="#0000ff"/><rect x="403" y="314" width="1" height="39" fill="#0000ff"/><rect x="403" y="352" width="52" height="1" fill="#0000ff"/><rect x="264" y="390" width="90" height="1" fill="#0000ff"/><rect x="264" y="390" width="1" height="265" fill="#0000ff"/><rect x="264" y="654" width="780" height="1" fill="#0000ff"/><rect x="1043" y="264" width="1" height="391" fill="#0000ff"/><rect x="968" y="264" width="76" height="1" fill="#0000ff"/><rect x="968" y="264" width="1" height="77" fill="#0000ff"/><rect x="968" y="415" width="1" height="152" fill="#0000ff"/><rect x="403" y="428" width="1" height="139" fill="#0000ff"/><rect x="478" y="566" width="1" height="39" fill="#0000ff"/><path d="M464.5 604.5L492.5 604.5L478.5 618.5Z" stroke="#0000ff"/><rect x="626" y="123" width="7" height="7" fill="#0000ff"/><rect x="764" y="123" width="7" height="7" fill="#0000ff"/><rect x="312" y="211" width="7" height="7" fill="#0000ff"/><rect x="400" y="349" width="7" height="7" fill="#0000ff"/><rect x="312" y="387" width="7" height="7" fill="#0000ff"/><rect x="764" y="349" width="7" height="7" fill="#0000ff"/><rect x="400" y="563" width="7" height="7" fill="#0000ff"/><rect x="475" y="563" width="7" height="7" fill="#0000ff"/><rect x="626" y="563" width="7" height="7" fill="#0000ff"/><rect x="764" y="563" width="7" height="7" fill="#0000ff"/><rect x="965" y="563" width="7" height="7" fill="#0000ff"/><rect x="201" y="253" width="1" height="6" fill="#00008c"/><rect x="201" y="308" width="1" height="7" fill="#00008c"/><circle cx="201.5" cy="283" r="25" stroke="#00008c"/><rect x="195" y="267" width="14" height="1" fill="#00008c"/><rect x="201" y="261" width="1" height="14" fill="#00008c"/><rect x="195" y="299" width="14" height="1" fill="#00008c"/><path d="M403.5 252.0C394.5 252.0 390.0 258.0 390.0 264.0C390.0 269.0 392.5 272.5 396.5 274.5C392.5 276.0 390.0 279.5 390.0 283.2C390.0 287.0 392.5 290.5 396.5 292.5C392.5 294.5 390.0 298.0 390.0 302.5C390.0 308.5 394.5 314.5 403.5 314.5" stroke="#00008c"/><ellipse cx="403.3" cy="273.8" rx="9.3" ry="3.2" stroke="#00008c"/><ellipse cx="403.3" cy="293.0" rx="9.3" ry="3.2" stroke="#00008c"/><path d="M315.5 252.0C324.5 252.0 328.0 258.0 328.0 264.0C328.0 269.0 326.5 272.5 322.5 274.5C326.5 276.0 328.0 279.5 328.0 283.2C328.0 287.0 326.5 290.5 322.5 292.5C326.5 294.5 328.0 298.0 328.0 302.5C328.0 308.5 324.5 314.5 315.5 314.5" stroke="#00008c"/><ellipse cx="315.7" cy="273.8" rx="9.3" ry="3.2" stroke="#00008c"/><ellipse cx="315.7" cy="293.0" rx="9.3" ry="3.2" stroke="#00008c"/><circle cx="409.5" cy="261.3" r="2.8" stroke="#00008c"/><circle cx="307.8" cy="305.2" r="2.8" stroke="#00008c"/><path d="M315.5 327.5L315.5 333.79L327.7 339.76L302.3 352.64L327.7 364.9L302.3 377.78L315.5 384.07L315.5 390.36" stroke="#00008c"/><path d="M767.5 227.5L767.5 233.79L780.6 239.76L754.3 252.64L780.6 264.9L754.3 277.78L767.5 284.07L767.5 290.36" stroke="#00008c"/><path d="M767.5 441.5L767.5 447.79L780.6 453.76L754.3 466.64L780.6 478.9L754.3 491.78L767.5 498.07L767.5 504.36" stroke="#00008c"/><path d="M1094.5 302.5L1094.5 308.79L1106.8 314.76L1081.3 327.64L1106.8 339.9L1081.3 352.78L1094.5 359.07L1094.5 365.36" stroke="#00008c"/><rect x="353" y="390" width="13" height="1" fill="#00008c"/><rect x="365" y="365" width="1" height="51" fill="#00008c"/><path d="M365.5 377.5L403.5 352.8" stroke="#00008c"/><path d="M365.5 403L384.5 415.6" stroke="#00008c"/><path d="M403.5 428.3L387.5 412.6L381.5 418.6Z" stroke="#00008c"/><rect x="454" y="352" width="16" height="1" fill="#00008c"/><rect x="487" y="352" width="17" height="1" fill="#00008c"/><rect x="469" y="340" width="1" height="26" fill="#00008c"/><path d="M469.5 340.5L487.5 352.5L469.5 365.5" stroke="#00008c"/><rect x="487" y="340" width="1" height="26" fill="#00008c"/><rect x="481" y="340" width="7" height="1" fill="#00008c"/><rect x="481" y="340" width="1" height="4" fill="#00008c"/><rect x="487" y="365" width="8" height="1" fill="#00008c"/><rect x="494" y="362" width="1" height="4" fill="#00008c"/><rect x="629" y="303" width="1" height="22" fill="#00008c"/><rect x="629" y="330" width="1" height="23" fill="#00008c"/><rect x="616" y="324" width="26" height="1" fill="#00008c"/><rect x="616" y="330" width="26" height="1" fill="#00008c"/><rect x="968" y="341" width="1" height="12" fill="#00008c"/><rect x="943" y="352" width="26" height="1" fill="#00008c"/><rect x="943" y="346" width="1" height="13" fill="#00008c"/><rect x="943" y="371" width="1" height="14" fill="#00008c"/><rect x="943" y="396" width="1" height="14" fill="#00008c"/><rect x="937" y="352" width="1" height="51" fill="#00008c"/><rect x="931" y="402" width="7" height="1" fill="#00008c"/><rect x="943" y="402" width="26" height="1" fill="#00008c"/><rect x="943" y="377" width="5" height="1" fill="#00008c"/><rect x="962" y="377" width="7" height="1" fill="#00008c"/><rect x="968" y="377" width="1" height="38" fill="#00008c"/><rect x="947" y="376" width="7" height="1" fill="#00008c"/><rect x="947" y="378" width="7" height="1" fill="#00008c"/><rect x="953" y="375" width="7" height="1" fill="#00008c"/><rect x="953" y="379" width="7" height="1" fill="#00008c"/><rect x="959" y="374" width="4" height="1" fill="#00008c"/><rect x="959" y="380" width="4" height="1" fill="#00008c"/><rect x="962" y="374" width="1" height="7" fill="#00008c"/><rect x="959" y="374" width="1" height="2" fill="#00008c"/><rect x="959" y="379" width="1" height="2" fill="#00008c"/></g><g font-family="'Liberation Sans', sans-serif" font-weight="bold" font-size="18" fill="#000" stroke="#000" stroke-width="0.3" stroke-linejoin="round"><text x="271" y="101">K L1 L2&#160;&#160;0.999999999999999999999</text><text x="252.5" y="127">.tran 0 100m 0 startup</text><text x="299" y="253" text-anchor="end">10µ</text><text x="278.5" y="290">L1</text><text x="417" y="252">10µ</text><text x="417" y="292">L2</text><text x="202.5" y="292" text-anchor="middle">1.5</text><text x="228" y="292">V1</text><text x="330" y="353">R1</text><text x="330" y="380.5">500</text><text x="243" y="386">base</text><text x="315" y="409" fill="#0000c8" stroke="#0000c8">Base</text><text x="403" y="365" fill="#0000c8" stroke="#0000c8">Collector</text><text x="409" y="548" fill="#0000c8" stroke="#0000c8">Emitter</text><text x="396" y="384">Q1</text><text x="396" y="413">2N2222</text><text x="477" y="336" text-anchor="middle">D1</text><text x="477.5" y="382" text-anchor="middle">D</text><text x="636" y="315">C2</text><text x="636" y="353">2.2µ</text><text x="783" y="252">R2</text><text x="783" y="281">240k</text><text x="783" y="466">R5</text><text x="783" y="494">200K</text><text x="974" y="372">M1</text><text x="974" y="403">BSS123</text><text x="1109" y="328">R7</text><text x="1109" y="356">200</text></g></svg>
</div></body></html>
